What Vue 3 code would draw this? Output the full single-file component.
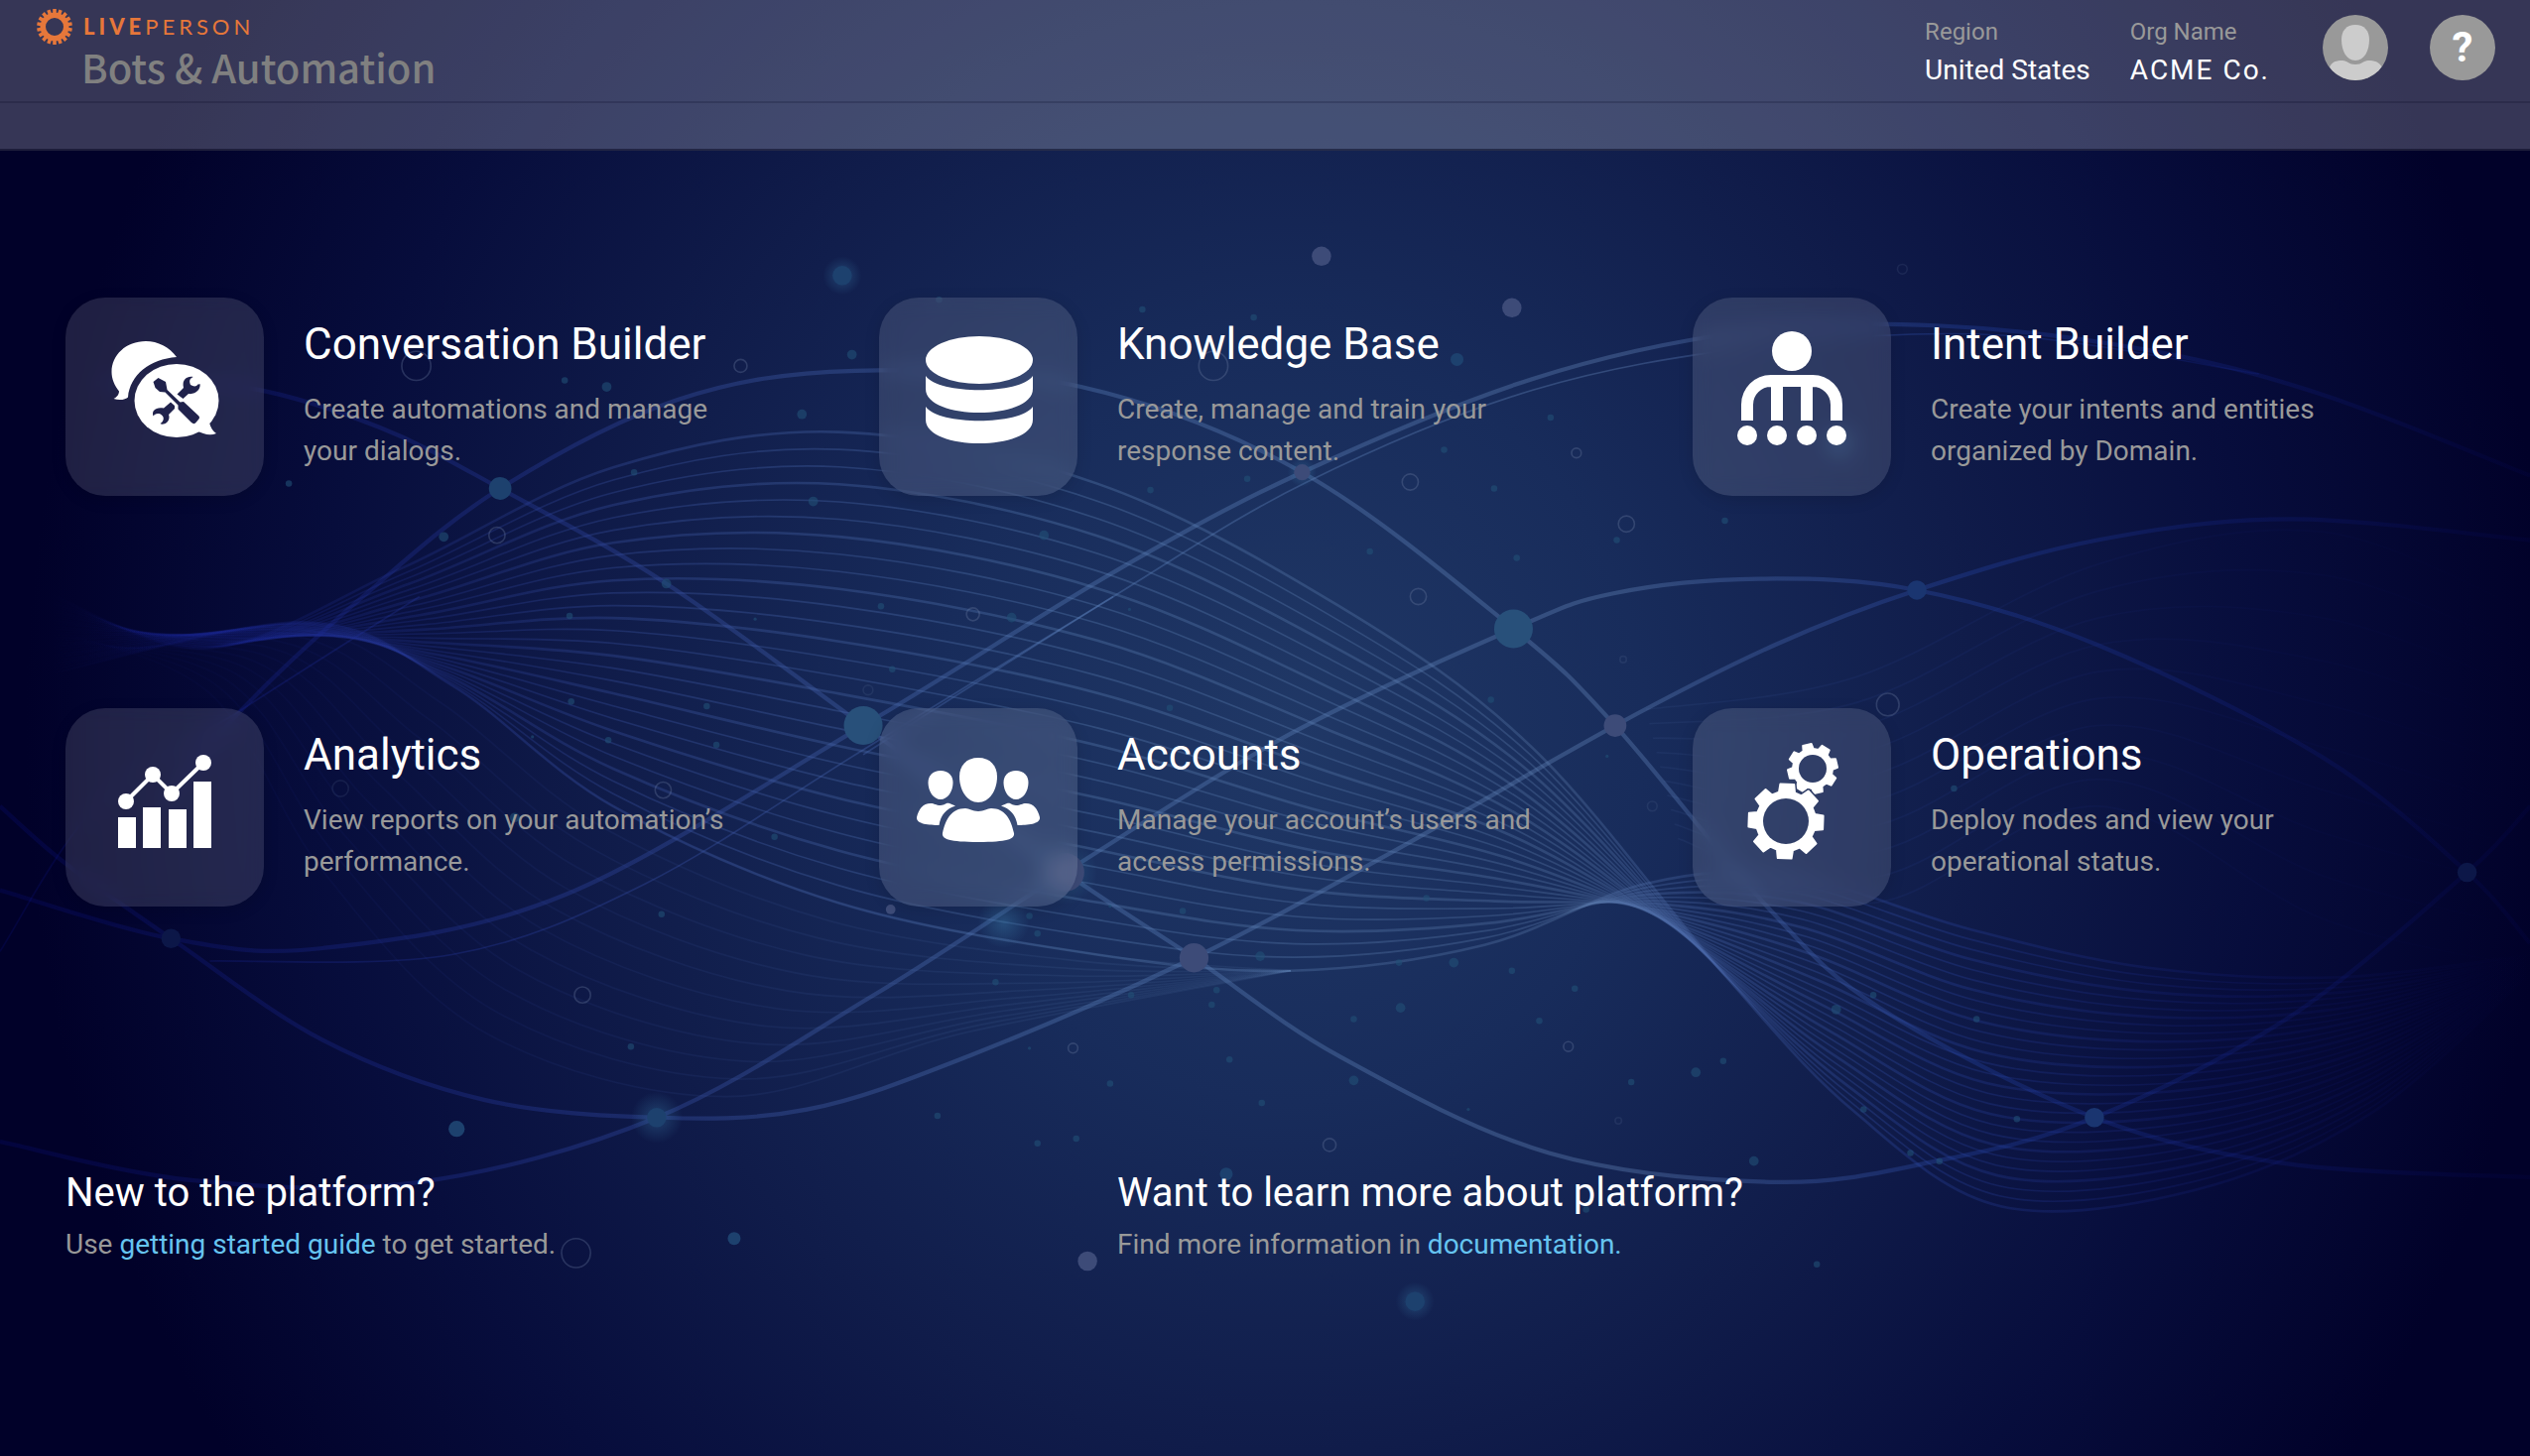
<script setup>
const cards = [
  { icon: 'chat', title: 'Conversation Builder', text: 'Create automations and manage your dialogs.' },
  { icon: 'database', title: 'Knowledge Base', text: 'Create, manage and train your response content.' },
  { icon: 'intent', title: 'Intent Builder', text: 'Create your intents and entities organized by Domain.' },
  { icon: 'chart', title: 'Analytics', text: 'View reports on your automation’s performance.' },
  { icon: 'people', title: 'Accounts', text: 'Manage your account’s users and access permissions.' },
  { icon: 'gears', title: 'Operations', text: 'Deploy nodes and view your operational status.' },
]

const r1 = (n) => Math.round(n * 10) / 10

// Smooth curve through a list of points (Catmull-Rom as cubic segments)
function smooth(pts) {
  let d = `M${r1(pts[0][0])} ${r1(pts[0][1])}`
  for (let i = 0; i < pts.length - 1; i++) {
    const a = pts[i - 1] || pts[i]
    const b = pts[i]
    const c = pts[i + 1]
    const e = pts[i + 2] || c
    d += `C${r1(b[0] + (c[0] - a[0]) / 6)} ${r1(b[1] + (c[1] - a[1]) / 6)} ${r1(c[0] - (e[0] - b[0]) / 6)} ${r1(c[1] - (e[1] - b[1]) / 6)} ${r1(c[0])} ${r1(c[1])}`
  }
  return d
}

// Family of curves between two borders; a point's third value bows the family at that point
function mesh(from, to, count) {
  return Array.from({ length: count }, (_, k) => {
    const t = k / (count - 1)
    return smooth(from.map((p, i) => [
      p[0] + (to[i][0] - p[0]) * t,
      p[1] + (to[i][1] - p[1]) * t + (p[2] || 0) * Math.sin(Math.PI * t),
    ]))
  })
}

// Outline of a toothed wheel, without its hole
function gear(cx, cy, outer, root, teeth, baseHalf, tipHalf, turn) {
  const pts = []
  for (let i = 0; i < teeth; i++) {
    const mid = turn + (i * 360) / teeth
    for (const [off, rad] of [[-baseHalf, root], [-tipHalf, outer], [tipHalf, outer], [baseHalf, root]]) {
      const a = ((mid + off) * Math.PI) / 180
      pts.push(`${r1(cx + rad * Math.sin(a))} ${r1(cy - rad * Math.cos(a))}`)
    }
  }
  return `M${pts.join('L')}Z`
}
const hole = (cx, cy, r) => `M${cx - r} ${cy}a${r} ${r} 0 1 0 ${2 * r} 0a${r} ${r} 0 1 0 ${-2 * r} 0Z`

const logoGear = gear(18, 18, 18, 14.4, 18, 7, 5.6, 0) + hole(18, 18, 9)
const bigGear = gear(94, 114, 38, 30, 8, 15.5, 10.5, 2)
const smallGear = gear(121, 61, 25, 20, 8, 15, 10, -13)

const curves = [
  [[100, 500], [150, 440], [225, 370], [310, 303], [420, 248], [530, 230], [670, 240], [807, 293], [938, 390], [1001, 450], [1095, 562], [1165, 625], [1298, 693], [1420, 722], [1568, 730]],
  [[60, 238], [150, 240], [235, 265], [310, 303], [413, 362], [535, 450], [660, 541], [740, 594], [830, 655], [960, 715], [1100, 733], [1200, 720], [1298, 693], [1420, 630], [1529, 541], [1568, 500]],
  [[0, 552], [106, 582], [200, 588], [350, 555], [535, 450], [690, 355], [807, 293], [950, 235], [1080, 206], [1200, 202], [1330, 217], [1440, 245], [1568, 295]],
  [[0, 500], [40, 535], [106, 582], [200, 645], [300, 682], [407, 693], [500, 688], [600, 655], [740, 594], [860, 530], [1001, 450], [1100, 400], [1188, 366], [1300, 335], [1420, 322], [1568, 335]],
  [[0, 708], [120, 732], [260, 733], [407, 693], [540, 618], [660, 541], [800, 455], [938, 390], [1000, 368], [1090, 359], [1188, 366], [1300, 400], [1440, 470], [1529, 541], [1568, 585]],
].map(smooth)

const accents = [
  [[535, 468], [690, 370], [810, 299], [950, 242], [1090, 215], [1240, 208], [1400, 232]],
  [[130, 596], [280, 592], [400, 548], [535, 465], [690, 370]],
  [[0, 590], [60, 500], [150, 440], [260, 370]],
].map(smooth)

const upper = [[30, 368], [130, 402], [250, 352, 6], [380, 290], [520, 268], [680, 300], [830, 376], [950, 464], [1070, 606], [1150, 690], [1240, 748], [1360, 738], [1470, 690], [1568, 604]]
const lower = [[30, 418], [190, 386], [280, 425], [380, 500], [520, 560], [680, 592], [800, 602], [920, 586], [1020, 548], [1110, 543], [1220, 576], [1330, 600], [1450, 606], [1568, 592]]
const under = [[30, 390], [130, 430], [200, 540], [300, 640], [450, 680], [600, 640], [800, 602]]
const overRight = [[1020, 440], [1150, 420], [1300, 350], [1440, 330], [1568, 380]]
const lowRight = [[1040, 520], [1160, 560], [1300, 500], [1440, 570], [1568, 600]]
const meshLines = mesh(upper, lower, 28)
const faintLines = [...mesh(lower.slice(0, 7), under, 12), ...mesh(overRight, lowRight, 10)]

// x, y, radius
const nodes = [
  [938, 390, 12, 'teal'], [535, 450, 12, 'teal'], [740, 594, 9, 'grey'], [1001, 450, 7, 'grey'],
  [310, 303, 7, 'dim'], [807, 293, 5, 'grey'], [1188, 366, 6, 'blue'], [1298, 693, 6, 'blue'],
  [1529, 541, 6, 'navy'], [106, 582, 6, 'navy'], [407, 693, 6, 'dim'], [522, 171, 6, 'dim'],
  [877, 807, 6, 'dim'], [819, 159, 6, 'grey'], [937, 191, 6, 'grey'], [674, 782, 6, 'grey'],
  [660, 541, 12, 'grey'], [283, 700, 5, 'dim'], [903, 223, 4, 'dim'], [552, 564, 3, 'grey'],
  [455, 768, 4, 'dim'], [760, 728, 4, 'dim'],
]
const glows = [[522, 171, 12], [407, 693, 16], [877, 807, 12], [622, 572, 16], [660, 541, 20], [807, 293, 9], [1140, 275, 12]]
const specks = [
  [528, 220, 3], [376, 240, 3], [350, 236, 2], [497, 257, 3], [179, 300, 2], [275, 333, 3], [393, 293, 2],
  [504, 311, 3], [413, 362, 3], [353, 382, 2], [468, 384, 1], [546, 376, 2], [627, 383, 3], [647, 332, 3],
  [700, 378, 1], [713, 304, 2], [849, 342, 2], [895, 279, 2], [926, 303, 2], [940, 346, 2], [961, 259, 2],
  [773, 297, 2], [777, 197, 2], [708, 192, 2], [582, 186, 2], [1002, 335, 2], [1069, 323, 2], [354, 435, 2],
  [438, 438, 2], [553, 415, 2], [725, 439, 2], [924, 434, 2], [377, 459, 2], [330, 457, 1], [444, 462, 2],
  [996, 469, 1], [319, 507, 3], [480, 519, 2], [410, 567, 2], [643, 579, 2], [638, 568, 2], [617, 609, 2],
  [701, 617, 2], [733, 565, 2], [688, 562, 1], [781, 593, 3], [867, 597, 2], [901, 597, 3], [937, 602, 2],
  [754, 614, 2], [751, 623, 2], [839, 632, 2], [868, 625, 3], [954, 633, 2], [976, 613, 2], [762, 657, 2],
  [839, 670, 3], [688, 672, 2], [782, 684, 2], [910, 688, 1], [1011, 671, 2], [1051, 665, 3], [1068, 658, 2],
  [1138, 626, 3], [1161, 617, 2], [1225, 632, 2], [638, 650, 1], [581, 692, 2], [643, 709, 2], [667, 706, 2],
  [1087, 720, 3], [1184, 715, 2], [1202, 720, 2], [1250, 694, 2], [1155, 688, 2], [391, 649, 2],
  [1126, 784, 2], [983, 750, 2], [1211, 489, 2], [884, 557, 2],
]
const rings = [
  [258, 227, 9], [752, 227, 9], [459, 227, 4], [308, 332, 5], [603, 381, 4], [874, 299, 5], [1008, 325, 5],
  [879, 370, 5], [977, 281, 3], [1170, 437, 7], [357, 777, 9], [361, 617, 5],
  [411, 490, 5], [665, 650, 3], [972, 649, 3], [824, 710, 4],
]
const faintRings = [[1179, 167, 3], [211, 489, 5], [1006, 409, 2], [538, 428, 3], [1003, 695, 2], [1024, 500, 3]]
</script>

<template>
  <div class="page">
    <svg class="backdrop" viewBox="0 0 1568 903" preserveAspectRatio="xMidYMid slice" aria-hidden="true">
      <defs>
        <linearGradient id="line" gradientUnits="userSpaceOnUse" x1="0" y1="0" x2="1568" y2="0">
          <stop offset="0" stop-color="#0a1090" stop-opacity=".2" />
          <stop offset=".22" stop-color="#2a3f9c" stop-opacity=".38" />
          <stop offset=".42" stop-color="#5a80bc" stop-opacity=".36" />
          <stop offset=".64" stop-color="#6688bb" stop-opacity=".36" />
          <stop offset=".78" stop-color="#2444a8" stop-opacity=".34" />
          <stop offset="1" stop-color="#0a1090" stop-opacity=".08" />
        </linearGradient>
        <linearGradient id="weave" gradientUnits="userSpaceOnUse" x1="0" y1="0" x2="1568" y2="0">
          <stop offset=".02" stop-color="#16209a" stop-opacity="0" />
          <stop offset=".1" stop-color="#1a2894" stop-opacity=".22" />
          <stop offset=".25" stop-color="#3a54a4" stop-opacity=".4" />
          <stop offset=".42" stop-color="#5a80b4" stop-opacity=".4" />
          <stop offset=".62" stop-color="#6080b0" stop-opacity=".36" />
          <stop offset=".76" stop-color="#2c48a8" stop-opacity=".36" />
          <stop offset=".9" stop-color="#141e80" stop-opacity=".22" />
          <stop offset="1" stop-color="#0a1070" stop-opacity="0" />
        </linearGradient>
        <radialGradient id="glow">
          <stop offset="0" stop-color="#4088b4" stop-opacity=".36" />
          <stop offset="1" stop-color="#4088b4" stop-opacity="0" />
        </radialGradient>
      </defs>
      <g fill="none" stroke="url(#weave)">
        <path v-for="(d, i) in faintLines" :key="'f' + i" :d="d" stroke-width="1" opacity=".3" />
        <path v-for="(d, i) in meshLines" :key="'m' + i" :d="d" :stroke-width="i % 3 ? 1 : 1.6" opacity=".85" />
      </g>
      <g fill="none" stroke="url(#line)">
        <path v-for="(d, i) in accents" :key="'a' + i" :d="d" stroke-width="1" />
        <path v-for="(d, i) in curves" :key="'c' + i" :d="d" stroke-width="2.6" />
      </g>
      <circle v-for="(g, i) in glows" :key="'g' + i" :cx="g[0]" :cy="g[1]" :r="g[2]" fill="url(#glow)" />
      <circle v-for="(n, i) in nodes" :key="'n' + i" :cx="n[0]" :cy="n[1]" :r="n[2]" :class="n[3]" />
      <circle v-for="(s, i) in specks" :key="'s' + i" :cx="s[0]" :cy="s[1]" :r="s[2]" class="speck" />
      <circle v-for="(o, i) in rings" :key="'o' + i" :cx="o[0]" :cy="o[1]" :r="o[2]" class="ring" />
      <circle v-for="(o, i) in faintRings" :key="'p' + i" :cx="o[0]" :cy="o[1]" :r="o[2]" class="ring faint" />
    </svg>

    <header class="header">
      <div class="topbar">
        <a class="brand" href="#">
          <span class="brand-row">
            <svg class="brand-gear" viewBox="0 0 36 36" aria-hidden="true"><path :d="logoGear" fill-rule="evenodd" /></svg>
            <span class="brand-name"><b>LIVE</b>PERSON</span>
          </span>
          <span class="product">Bots &amp; Automation</span>
        </a>
        <div class="account">
          <dl class="fact">
            <dt>Region</dt>
            <dd>United States</dd>
          </dl>
          <dl class="fact org">
            <dt>Org Name</dt>
            <dd class="spaced">ACME Co.</dd>
          </dl>
          <button class="round avatar" type="button" aria-label="Profile">
            <svg viewBox="0 0 66 66" aria-hidden="true">
              <path d="M33 10C42 10 47 16 47 25C47 36 42 46 33 46S19 36 19 25C19 16 24 10 33 10Z" />
              <path d="M7 53C9 47 14 46 20 46C25 46 26 50 33 50S41 46 46 46C52 46 57 47 60 53C54 61 45 66 33 66S13 61 7 53Z" />
            </svg>
          </button>
          <button class="round help" type="button" aria-label="Help">?</button>
        </div>
      </div>
      <div class="strip"></div>
    </header>

    <main class="main">
      <section class="cards">
        <a v-for="card in cards" :key="card.title" class="card" href="#">
          <span class="tile">
            <svg viewBox="0 0 200 200" aria-hidden="true">
              <g v-if="card.icon === 'chat'">
                <path d="M112 60C105 50 93 44 81 44C61 44 46.500 58 46.500 75C46.500 82 49.500 89 54 94.500C54 98 51 101 48.500 102C54 104 61 103 63 100.500C65 78 85 62 112 60Z" />
                <ellipse cx="112" cy="104" rx="42.500" ry="37" />
                <path d="M145 126C146 131 149 135 152 137C146 139.500 139 138 132 134Z" />
                <g class="cut">
                  <path d="M88.500 85L93.500 81L101 85L102.500 93L115.500 105.500L119 105L134 119Q136 121 134 123L131 126.500Q129 128 127 126L113.500 112.500L113.500 108.500L100.500 95.500L95 95L90.500 91Z" />
                  <path d="M112.500 97.500L119 91C117 82 123 79 128.700 80C125 82 124.500 84 126 88C129 90 132 90 133.500 87.500L135.700 87.300C136 93 131 98 124 97L118.500 102Z" />
                  <path d="M106 105.500L110 109V112L104 118C106 123 102 128 97 127.800L95.500 127C99 125 100 121 97 118.500C94 116 90 117 88.500 119.500C86.500 114 91 110 99 111.500Z" />
                </g>
              </g>
              <g v-else-if="card.icon === 'database'">
                <ellipse cx="101" cy="63" rx="54" ry="24" />
                <path d="M47 79C60 98 142 98 155 79V92C155 124 47 124 47 92Z" />
                <path d="M47 110C60 129 142 129 155 110V123C155 155 47 155 47 123Z" />
              </g>
              <g v-else-if="card.icon === 'intent'">
                <circle cx="100" cy="54" r="20" />
                <path class="stroke arms" d="M55 124V108A24 24 0 0 1 79 84H121A24 24 0 0 1 145 108V124M85 84V124M115 84V124" />
                <circle cx="55" cy="139" r="10" />
                <circle cx="85" cy="139" r="10" />
                <circle cx="115" cy="139" r="10" />
                <circle cx="145" cy="139" r="10" />
              </g>
              <g v-else-if="card.icon === 'chart'">
                <path d="M53 110H71V141H53ZM78 100H96V141H78ZM104 102H122V141H104ZM129 74H147V141H129Z" />
                <path class="stroke trend" d="M61 94L88 67L107 86L139 55" />
                <circle cx="61" cy="94" r="8" />
                <circle cx="88" cy="67" r="8" />
                <circle cx="107" cy="86" r="8" />
                <circle cx="139" cy="55" r="8" />
              </g>
              <g v-else-if="card.icon === 'people'">
                <path d="M100 50C112 50 119 58 119 69C119 83 111 95 100 95S81 83 81 69C81 58 88 50 100 50Z" />
                <path d="M62 63C70 63 74.500 68 74.500 75C74.500 84 69 92 62 92S49.500 84 49.500 75C49.500 68 54 63 62 63Z" />
                <path d="M138 63C146 63 150.500 68 150.500 75C150.500 84 145 92 138 92S125.500 84 125.500 75C125.500 68 130 63 138 63Z" />
                <path d="M87 101C91 101 94 104 100 104S109 101 113 101C127 101 133 112 136 126C137 132 129 135 100 135S63 132 64 126C67 112 73 101 87 101Z" />
                <path d="M52 96C56 96 57 98 62 98S67 95 71 96L77 98.500C68 101 62 108 60.500 118C51 118 37 117 38 110C40 102 44 96 52 96Z" />
                <path d="M148 96C144 96 143 98 138 98S133 95 129 96L123 98.500C132 101 138 108 139.500 118C149 118 163 117 162 110C160 102 156 96 148 96Z" />
              </g>
              <g v-else>
                <mask id="clear">
                  <rect width="200" height="200" fill="#fff" />
                  <path :d="bigGear" fill="#000" stroke="#000" stroke-width="5" stroke-linejoin="round" />
                </mask>
                <mask id="holes">
                  <rect width="200" height="200" fill="#fff" />
                  <circle cx="94" cy="114" r="23" fill="#000" />
                  <circle cx="121" cy="61" r="14" fill="#000" />
                </mask>
                <g mask="url(#holes)">
                  <path class="wheel" :d="bigGear" />
                  <g mask="url(#clear)"><path class="wheel" :d="smallGear" /></g>
                </g>
              </g>
            </svg>
          </span>
          <span class="copy">
            <strong class="title">{{ card.title }}</strong>
            <span class="text">{{ card.text }}</span>
          </span>
        </a>
      </section>

      <section class="links">
        <div class="link-block">
          <h2>New to the platform?</h2>
          <p>Use <a href="#">getting started guide</a> to get started.</p>
        </div>
        <div class="link-block more">
          <h2>Want to learn more about platform?</h2>
          <p>Find more information in <a href="#">documentation.</a></p>
        </div>
      </section>
    </main>
  </div>
</template>

<style>
body {
  margin: 0;
  background: #01022b;
}
</style>

<style scoped>
.page {
  position: relative;
  isolation: isolate;
  min-height: 100vh;
  font-family: Roboto, sans-serif;
  color: #fff;
  background: radial-gradient(ellipse 50% 92% at 51% 50%, #203866 0%, #182c5b 28%, #101c4a 54%, #070d3c 77%, #010129 100%);
}
.backdrop {
  position: absolute;
  inset: 0;
  z-index: -1;
  width: 100%;
  height: 100%;
}
.teal { fill: #28507a; }
.dim { fill: #1d416e; }
.grey { fill: #3d4b78; }
.blue { fill: #1a3570; }
.navy { fill: #0c1748; }
.speck { fill: #225077; opacity: .6; }
.ring { fill: none; stroke: #7484a8; stroke-opacity: .3; stroke-width: 1; }
.ring.faint { stroke-opacity: .14; }

.header {
  background: rgba(255, 255, 255, .21);
  border-bottom: 2px solid rgba(0, 0, 25, .45);
}
.topbar {
  display: flex;
  justify-content: space-between;
  height: 102px;
  padding: 0 35px 0 37px;
  border-bottom: 2px solid rgba(0, 0, 30, .18);
}
.strip { height: 46px; }
.brand {
  display: flex;
  flex-direction: column;
  padding-top: 9px;
  text-decoration: none;
}
.brand-row {
  display: flex;
  align-items: center;
  gap: 11px;
  height: 36px;
}
.brand-gear {
  width: 36px;
  height: 36px;
  fill: #e6773a;
}
.brand-name {
  font: 400 22px/36px Lato, sans-serif;
  letter-spacing: 4px;
  color: #e6773a;
}
.brand-name b { font-weight: 900; }
.product {
  margin-left: 45px;
  font: 500 40px/44px "Noto Sans CJK SC", sans-serif;
  color: #808080;
}
.account {
  display: flex;
  align-items: flex-start;
  padding-top: 15px;
}
.fact { margin: 0 40px 0 0; }
.fact.org { margin-right: 53px; }
.fact dt {
  font-size: 24px;
  line-height: 34px;
  color: #999;
}
.fact dd {
  margin: 0;
  font-size: 28px;
  line-height: 44px;
}
.fact .spaced { letter-spacing: 2px; }
.round {
  width: 66px;
  height: 66px;
  padding: 0;
  border: 0;
  border-radius: 50%;
  overflow: hidden;
  background: #999;
  color: #fff;
  font: 700 42px/66px Roboto, sans-serif;
}
.avatar { margin-right: 42px; }
.avatar svg {
  display: block;
  fill: #ccc;
}

.main { padding: 148px 24px 0 66px; }
.cards {
  display: grid;
  grid-template-columns: repeat(3, 1fr);
  row-gap: 214px;
}
.card {
  display: flex;
  gap: 40px;
  color: inherit;
  text-decoration: none;
}
.tile {
  flex: none;
  width: 200px;
  height: 200px;
  border-radius: 40px;
  background: rgba(255, 255, 255, .12);
  box-shadow: 0 4px 16px rgba(0, 0, 0, .12);
  backdrop-filter: blur(10px);
}
.tile svg {
  display: block;
  fill: #fff;
}
.cut { fill: #20224c; }
.stroke { fill: none; stroke: #fff; }
.arms { stroke-width: 12; }
.trend { stroke-width: 4; }
.wheel { stroke: #fff; stroke-width: 2; stroke-linejoin: round; }
.copy {
  display: flex;
  flex-direction: column;
  gap: 19px;
  max-width: 440px;
  padding-top: 21px;
}
.title {
  font-weight: 400;
  font-size: 44px;
  line-height: 52px;
}
.text {
  font-size: 28px;
  line-height: 42px;
  color: #999;
}
.links {
  display: grid;
  grid-template-columns: repeat(3, 1fr);
  margin-top: 265px;
}
.more {
  grid-column: 2 / span 2;
  padding-left: 240px;
}
.link-block h2 {
  margin: 0 0 7px;
  font-weight: 400;
  font-size: 40px;
  line-height: 48px;
}
.link-block p {
  margin: 0;
  font-size: 28px;
  line-height: 42px;
  color: #999;
}
.link-block a {
  color: #66c4f0;
  text-decoration: none;
}
</style>
